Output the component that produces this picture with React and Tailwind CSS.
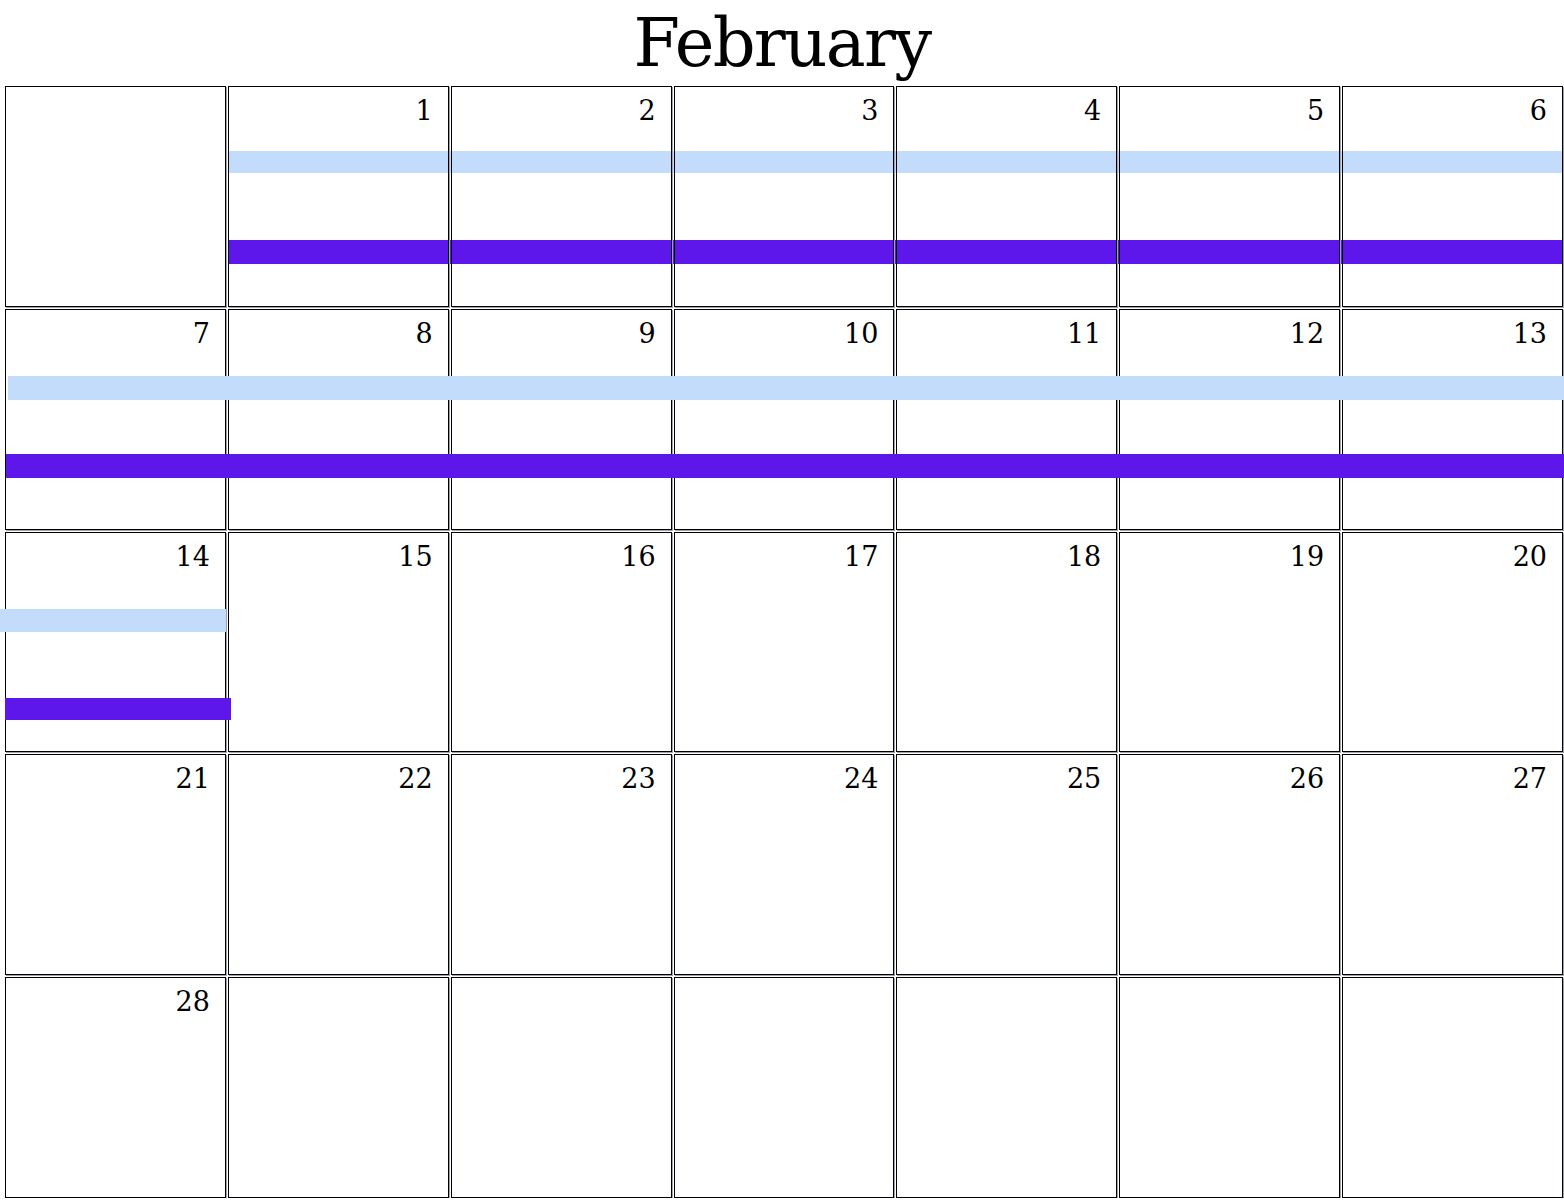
import React from "react";

const weeks = [
	{
		days: [null, 1, 2, 3, 4, 5, 6],
		rows: "grid-rows-[65px_22px_67px_24px_1fr]",
		under: true,
		bars: [
			{ cls: "col-start-2 col-end-8 row-start-2 mr-[-1px] bg-[#c3dcfc]" },
			{ cls: "col-start-2 col-end-8 row-start-4 mr-[-1px] bg-[#5e17eb]" },
		],
	},
	{
		days: [7, 8, 9, 10, 11, 12, 13],
		rows: "grid-rows-[67px_24px_54px_24px_1fr]",
		bars: [
			{ cls: "col-start-1 col-end-8 row-start-2 ml-[3px] mr-[-1px] bg-[#c3dcfc]" },
			{ cls: "col-start-1 col-end-8 row-start-4 ml-[1px] mr-[-1px] bg-[#5e17eb]" },
		],
	},
	{
		days: [14, 15, 16, 17, 18, 19, 20],
		rows: "grid-rows-[77px_23px_66px_22px_1fr]",
		bars: [
			{ cls: "col-start-1 col-end-2 row-start-2 ml-[-5px] bg-[#c3dcfc]" },
			{ cls: "col-start-1 col-end-2 row-start-4 mr-[-5px] bg-[#5e17eb]" },
		],
	},
	{ days: [21, 22, 23, 24, 25, 26, 27], rows: "grid-rows-1", bars: [] },
	{ days: [28, null, null, null, null, null, null], rows: "grid-rows-1", bars: [] },
];

const App = () => {
	return (
		<div
			className="w-[1564px] bg-white text-black"
			style={{ fontFamily: '"DejaVu Serif", "Liberation Serif", serif' }}
		>
			<h1 className="h-[86px] text-center text-[67px] leading-[86px] font-normal tracking-tight">
				February
			</h1>
			<div className="ml-[5px] flex w-[1558px] flex-col gap-[2px]">
				{weeks.map((week, w) => (
					<div
						key={w}
						className={`grid h-[220.8px] grid-cols-7 gap-x-[2px] ${week.rows}`}
					>
						{week.days.map((day, i) => (
							<div
								key={i}
								style={{ gridColumn: i + 1 }}
								className={`row-span-full row-start-1 border border-black pr-[15px] pt-[10px] text-right text-[27px] leading-none shadow-[1px_1px_0_#9ca3af] ${
									week.under ? "relative z-10" : ""
								}`}
							>
								{day}
							</div>
						))}
						{/* event bars */}
						{week.bars.map((bar, b) => (
							<div key={b} className={`relative ${bar.cls}`} />
						))}
					</div>
				))}
			</div>
		</div>
	);
};

export default App;
